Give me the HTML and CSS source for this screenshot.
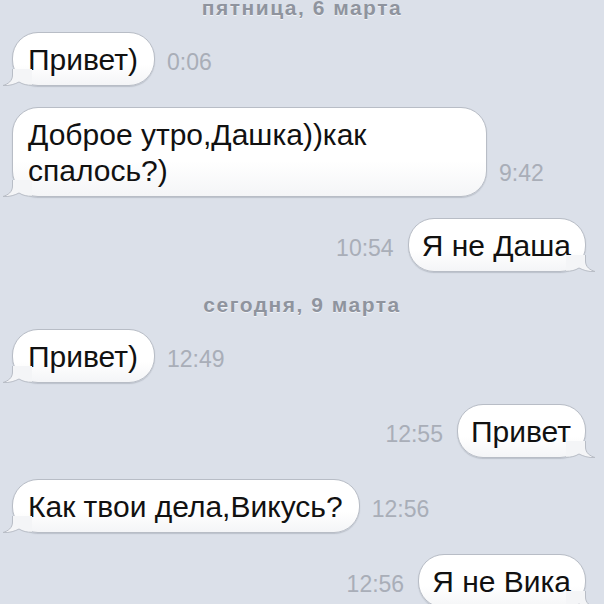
FILE: index.html
```html
<!DOCTYPE html>
<html lang="ru">
<head>
    <meta charset="UTF-8">
    <meta name="viewport" content="width=device-width, initial-scale=1.0">
    <title>Сообщения</title>
    <link rel="stylesheet" href="styles.css">
</head>
<body>

    <div class="chat">
        <!-- friday -->
        <div class="day day-first">пятница, 6 марта</div>

        <div class="row in">
            <div class="bubble">Привет)
                <svg class="tail" viewBox="0 0 30 20"><path class="tail-fill" d="M10.5 3 L10.5 9 C10.5 15 6 18 1 19.5 C8 20 13 18 17 16 C21 18.5 25 19.3 30 19.3 L30 3 Z"/><path class="tail-line" d="M10.5 3 L10.5 9 C10.5 15 6 18 1 19.5 C8 20 13 18 17 16 C21 18.5 25 19.3 30 19.3"/></svg>
            </div>
            <span class="time">0:06</span>
        </div>

        <div class="row in">
            <div class="bubble">Доброе утро,Дашка))как спалось?)
                <svg class="tail" viewBox="0 0 30 20"><path class="tail-fill" d="M10.5 3 L10.5 9 C10.5 15 6 18 1 19.5 C8 20 13 18 17 16 C21 18.5 25 19.3 30 19.3 L30 3 Z"/><path class="tail-line" d="M10.5 3 L10.5 9 C10.5 15 6 18 1 19.5 C8 20 13 18 17 16 C21 18.5 25 19.3 30 19.3"/></svg>
            </div>
            <span class="time">9:42</span>
        </div>

        <div class="row out">
            <span class="time">10:54</span>
            <div class="bubble">Я не Даша
                <svg class="tail" viewBox="0 0 30 20"><path class="tail-fill" d="M10.5 3 L10.5 9 C10.5 15 6 18 1 19.5 C8 20 13 18 17 16 C21 18.5 25 19.3 30 19.3 L30 3 Z"/><path class="tail-line" d="M10.5 3 L10.5 9 C10.5 15 6 18 1 19.5 C8 20 13 18 17 16 C21 18.5 25 19.3 30 19.3"/></svg>
            </div>
        </div>

        <!-- today -->
        <div class="day">сегодня, 9 марта</div>

        <div class="row in">
            <div class="bubble">Привет)
                <svg class="tail" viewBox="0 0 30 20"><path class="tail-fill" d="M10.5 3 L10.5 9 C10.5 15 6 18 1 19.5 C8 20 13 18 17 16 C21 18.5 25 19.3 30 19.3 L30 3 Z"/><path class="tail-line" d="M10.5 3 L10.5 9 C10.5 15 6 18 1 19.5 C8 20 13 18 17 16 C21 18.5 25 19.3 30 19.3"/></svg>
            </div>
            <span class="time">12:49</span>
        </div>

        <div class="row out">
            <span class="time">12:55</span>
            <div class="bubble">Привет
                <svg class="tail" viewBox="0 0 30 20"><path class="tail-fill" d="M10.5 3 L10.5 9 C10.5 15 6 18 1 19.5 C8 20 13 18 17 16 C21 18.5 25 19.3 30 19.3 L30 3 Z"/><path class="tail-line" d="M10.5 3 L10.5 9 C10.5 15 6 18 1 19.5 C8 20 13 18 17 16 C21 18.5 25 19.3 30 19.3"/></svg>
            </div>
        </div>

        <div class="row in">
            <div class="bubble">Как твои дела,Викусь?
                <svg class="tail" viewBox="0 0 30 20"><path class="tail-fill" d="M10.5 3 L10.5 9 C10.5 15 6 18 1 19.5 C8 20 13 18 17 16 C21 18.5 25 19.3 30 19.3 L30 3 Z"/><path class="tail-line" d="M10.5 3 L10.5 9 C10.5 15 6 18 1 19.5 C8 20 13 18 17 16 C21 18.5 25 19.3 30 19.3"/></svg>
            </div>
            <span class="time">12:56</span>
        </div>

        <div class="row out">
            <span class="time">12:56</span>
            <div class="bubble">Я не Вика
                <svg class="tail" viewBox="0 0 30 20"><path class="tail-fill" d="M10.5 3 L10.5 9 C10.5 15 6 18 1 19.5 C8 20 13 18 17 16 C21 18.5 25 19.3 30 19.3 L30 3 Z"/><path class="tail-line" d="M10.5 3 L10.5 9 C10.5 15 6 18 1 19.5 C8 20 13 18 17 16 C21 18.5 25 19.3 30 19.3"/></svg>
            </div>
        </div>
    </div>

</body>
</html>
```

FILE: styles.css
```css
html,
body {
    margin: 0;
    height: 100%;
    overflow: hidden;
}

body {
    background-color: #dbe0e9;
    font-family: "Liberation Sans", Arial, sans-serif;
}

.chat {
    display: flex;
    flex-direction: column;
}

/* date separators */
.day {
    margin-top: 21px;
    margin-bottom: 12px;
    height: 24px;
    line-height: 24px;
    text-align: center;
    font-size: 21px;
    font-weight: bold;
    letter-spacing: 1.5px;
    color: #8f949e;
    text-shadow: 0 1px 0 #f1f3f7;
}

.day-first {
    margin-top: -4px;
}

.day + .row {
    margin-top: 0;
}

.row {
    display: flex;
    align-items: last baseline;
    gap: 12px;
    margin-top: 21px;
}

.row.in {
    padding-left: 12px;
}

.row.out {
    justify-content: flex-end;
    padding-right: 18px;
    gap: 14px;
}

.bubble {
    position: relative;
    box-sizing: border-box;
    max-width: 475px;
    padding: 9px 16px 7px 15px;
    font-size: 30px;
    line-height: 36px;
    color: #111111;
    background: linear-gradient(#ffffff 60%, #f4f5f7);
    border: 1px solid #b8bdc6;
    border-radius: 26px;
    box-shadow: 0 1px 1px rgba(90, 98, 112, 0.25);
}

.row.out .bubble {
    padding: 9px 14px 7px 13px;
}

.tail {
    position: absolute;
    left: -11px;
    bottom: -1px;
    width: 30px;
    height: 20px;
}

.row.out .tail {
    left: auto;
    right: -11px;
    transform: scaleX(-1);
}

.tail-fill {
    fill: #f4f5f7;
}

.tail-line {
    fill: none;
    stroke: #b8bdc6;
    stroke-width: 1;
}

.time {
    font-size: 23px;
    color: #a9aeb8;
    white-space: nowrap;
}
```
